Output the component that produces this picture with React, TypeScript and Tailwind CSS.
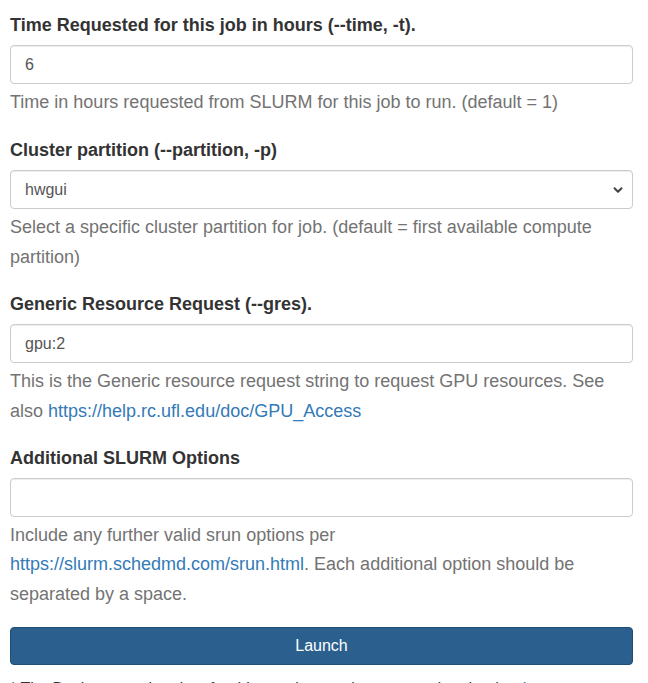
import { ChevronDown } from "lucide-react";

const LABEL = "block text-[18px] font-bold leading-[24px] text-[#333333] mb-[8px]";
const INPUT =
  "block w-full h-[39px] px-[14px] text-[16px] text-[#555555] bg-white border border-[#cccccc] rounded-[4px] outline-none shadow-[inset_0_1px_1px_rgba(0,0,0,0.075)]";
const HELP = "mt-[4px] text-[18px] leading-[29.4px] text-[#737373]";
const LINK = "text-[#337ab7]";

export default function App() {
  return (
    <div
      className="w-[648px] h-[683px] overflow-hidden bg-white pl-[10px] pr-[15px] pt-[13px]"
      style={{ fontFamily: "'Liberation Sans', Arial, sans-serif" }}
    >
      <form onSubmit={(e) => e.preventDefault()}>
        {/* time */}
        <div className="mb-[21px]">
          <label className={LABEL}>Time Requested for this job in hours (--time, -t).</label>
          <input type="text" defaultValue="6" className={INPUT} />
          <p className={HELP}>Time in hours requested from SLURM for this job to run. (default = 1)</p>
        </div>

        {/* partition */}
        <div className="mb-[20px]">
          <label className={LABEL}>Cluster partition (--partition, -p)</label>
          <div className="relative">
            <select defaultValue="hwgui" className={`${INPUT} appearance-none`}>
              <option value="hwgui">hwgui</option>
            </select>
            <ChevronDown
              size={14}
              strokeWidth={3.5}
              className="absolute right-[8px] top-1/2 -translate-y-1/2 text-[#444444] pointer-events-none"
            />
          </div>
          <p className={HELP}>
            Select a specific cluster partition for job. (default = first available compute partition)
          </p>
        </div>

        {/* gres */}
        <div className="mb-[20px]">
          <label className={LABEL}>Generic Resource Request (--gres).</label>
          <input type="text" defaultValue="gpu:2" className={INPUT} />
          <p className={HELP}>
            This is the Generic resource request string to request GPU resources. See also{" "}
            <a className={LINK}>https://help.rc.ufl.edu/doc/GPU_Access</a>
          </p>
        </div>

        {/* slurm options */}
        <div className="mb-[18px]">
          <label className={LABEL}>Additional SLURM Options</label>
          <input type="text" className={INPUT} />
          <p className={HELP}>
            Include any further valid srun options per{" "}
            <a className={LINK}>https://slurm.schedmd.com/srun.html</a>. Each additional option should be
            separated by a space.
          </p>
        </div>

        <button
          type="submit"
          className="block w-full h-[38px] rounded-[4px] bg-[#2b5f8e] border border-[#204d74] text-white text-[16px]"
        >
          Launch
        </button>

        <p className="mt-[13px] text-[16px] leading-[22px] text-[#333333]">
          * The Desktop session data for this session can be accessed under the{" "}
          <a className={LINK}>data root directory</a>.
        </p>
      </form>
    </div>
  );
}
